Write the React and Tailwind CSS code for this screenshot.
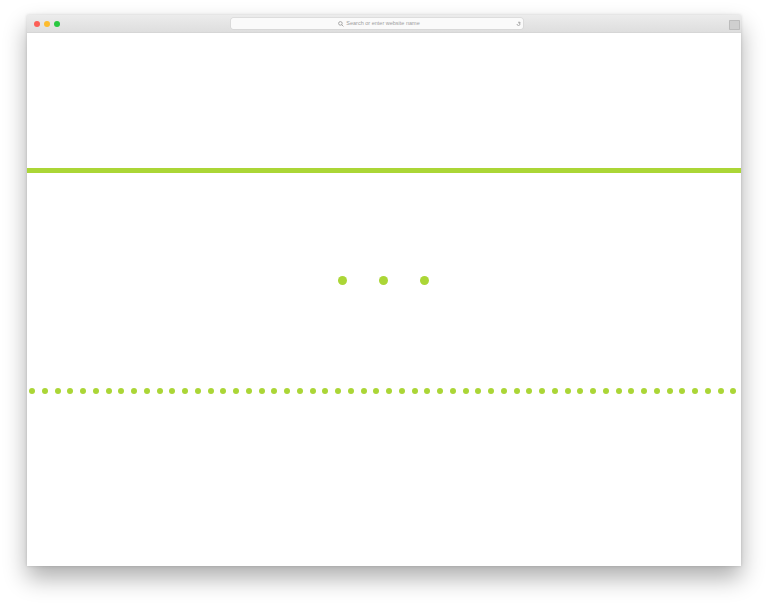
import React from 'react';

const GREEN = 'bg-[#abd636]';

function TitleBar() {
  return (
    <div className="relative flex h-[18px] items-center border-b border-[#d6d6d6] bg-gradient-to-b from-[#ececec] to-[#dedede]">
      {/* traffic lights */}
      <div className="ml-[7px] flex gap-[4px]">
        <span className="h-[6px] w-[6px] rounded-full bg-[#fc5f57]" />
        <span className="h-[6px] w-[6px] rounded-full bg-[#fdbc2e]" />
        <span className="h-[6px] w-[6px] rounded-full bg-[#28c840]" />
      </div>
      {/* address bar */}
      <div className="ml-[171px] flex h-[11px] w-[292px] items-center justify-center rounded-[2px] bg-[#fafafa] pl-[4px] shadow-[0_0_0_0.5px_#d0d0d0]">
        <svg width="6" height="6" viewBox="0 0 10 10" className="mr-[2px]">
          <circle cx="4" cy="4" r="3" fill="none" stroke="#9a9a9a" strokeWidth="1.4" />
          <path d="M6.2 6.2 9 9" stroke="#9a9a9a" strokeWidth="1.4" />
        </svg>
        <span className="text-[5.5px] leading-none text-[#a0a0a0]" style={{ fontFamily: '"Liberation Sans", Arial, sans-serif' }}>
          Search or enter website name
        </span>
        <svg width="5" height="6" viewBox="0 0 10 12" className="absolute left-[489px]">
          <path d="M2 6a3 3 0 1 0 3-3h2M6 1l2 2-2 2" fill="none" stroke="#8a8a8a" strokeWidth="1.3" />
        </svg>
      </div>
      <span className="absolute right-[1px] top-[5px] h-[10px] w-[11px] rounded-[1px] bg-[#cfcfcf] shadow-[inset_0_0_0_1px_#bcbcbc]" />
    </div>
  );
}

export default function App() {
  const dots = Array.from({ length: 56 }, (_, i) => i);

  return (
    <div className="h-[605px] w-[768px] overflow-hidden bg-white pt-[15px]">
      <div className="ml-[27px] h-[551px] w-[714px] bg-white shadow-[0_12px_22px_rgba(0,0,0,0.32),0_0_3px_rgba(0,0,0,0.15)]">
        <TitleBar />
        <div className="flex flex-col">
          {/* solid bar */}
          <div className={`mt-[135px] h-[5px] w-full ${GREEN}`} />

          {/* three dots */}
          <div className="mt-[103px] flex justify-center gap-[32px] pr-[1px]">
            <span className={`h-[9px] w-[9px] rounded-full ${GREEN}`} />
            <span className={`h-[9px] w-[9px] rounded-full ${GREEN}`} />
            <span className={`h-[9px] w-[9px] rounded-full ${GREEN}`} />
          </div>

          {/* dotted line */}
          <div className="mt-[103px] flex justify-between pl-[2px] pr-[4px]">
            {dots.map((i) => (
              <span key={i} className={`h-[6px] w-[6px] rounded-full ${GREEN}`} />
            ))}
          </div>
        </div>
      </div>
    </div>
  );
}
